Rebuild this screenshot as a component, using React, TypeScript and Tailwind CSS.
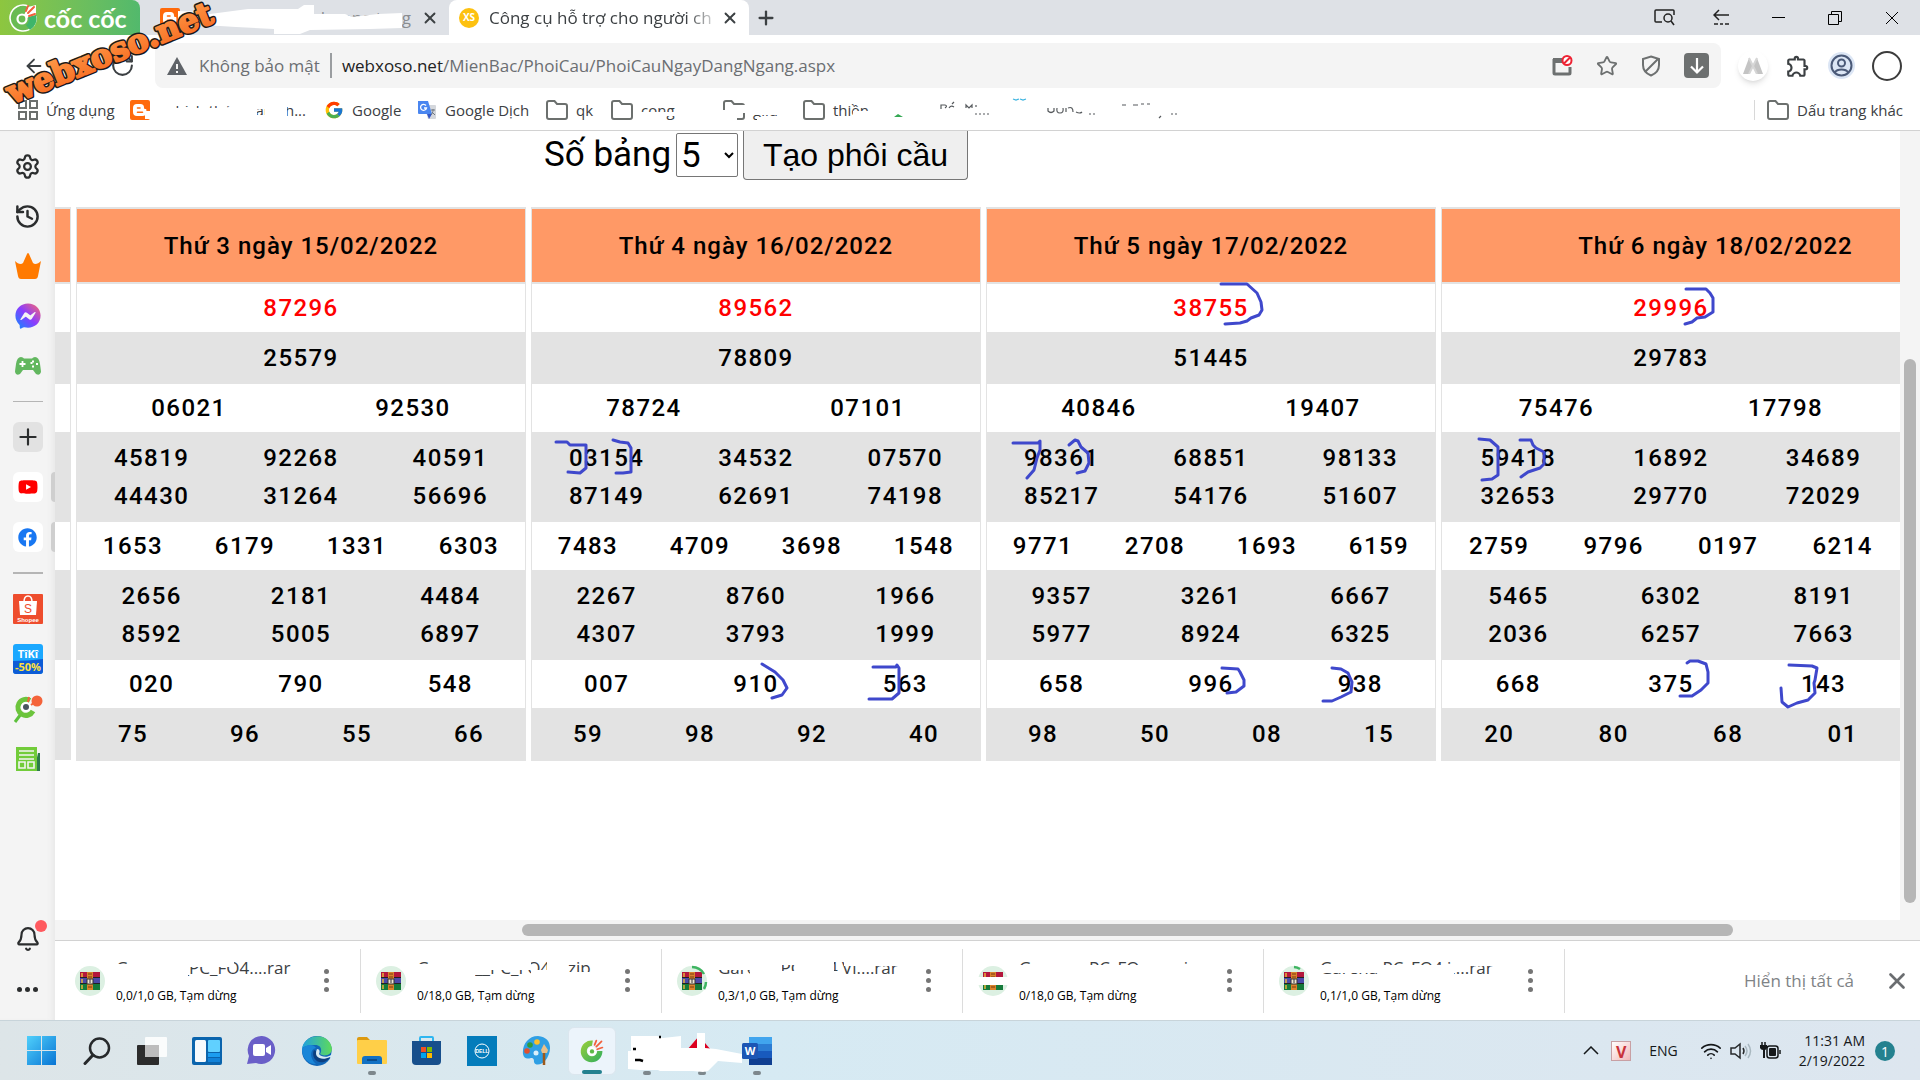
import type { ReactNode } from 'react'
import { Bell, Plus, RotateCw, ArrowLeft, Settings, Star, X, History, Wifi } from 'lucide-react'
import { FaFacebook, FaYoutube, FaFacebookMessenger } from 'react-icons/fa'
import { FcGoogle } from 'react-icons/fc'
import { MdOutlineExtension } from 'react-icons/md'

type Day = { title: string; rows: string[][][] }

// every row is a list of cells, every cell a list of stacked numbers
const DAYS: Day[] = [
  {
    title: 'Thứ 3 ngày 15/02/2022',
    rows: [
      [['87296']],
      [['25579']],
      [['06021'], ['92530']],
      [['45819', '44430'], ['92268', '31264'], ['40591', '56696']],
      [['1653'], ['6179'], ['1331'], ['6303']],
      [['2656', '8592'], ['2181', '5005'], ['4484', '6897']],
      [['020'], ['790'], ['548']],
      [['75'], ['96'], ['55'], ['66']],
    ],
  },
  {
    title: 'Thứ 4 ngày 16/02/2022',
    rows: [
      [['89562']],
      [['78809']],
      [['78724'], ['07101']],
      [['03154', '87149'], ['34532', '62691'], ['07570', '74198']],
      [['7483'], ['4709'], ['3698'], ['1548']],
      [['2267', '4307'], ['8760', '3793'], ['1966', '1999']],
      [['007'], ['910'], ['563']],
      [['59'], ['98'], ['92'], ['40']],
    ],
  },
  {
    title: 'Thứ 5 ngày 17/02/2022',
    rows: [
      [['38755']],
      [['51445']],
      [['40846'], ['19407']],
      [['98361', '85217'], ['68851', '54176'], ['98133', '51607']],
      [['9771'], ['2708'], ['1693'], ['6159']],
      [['9357', '5977'], ['3261', '8924'], ['6667', '6325']],
      [['658'], ['996'], ['938']],
      [['98'], ['50'], ['08'], ['15']],
    ],
  },
  {
    title: 'Thứ 6 ngày 18/02/2022',
    rows: [
      [['29996']],
      [['29783']],
      [['75476'], ['17798']],
      [['59418', '32653'], ['16892', '29770'], ['34689', '72029']],
      [['2759'], ['9796'], ['0197'], ['6214']],
      [['5465', '2036'], ['6302', '6257'], ['8191', '7663']],
      [['668'], ['375'], ['143']],
      [['20'], ['80'], ['68'], ['01']],
    ],
  },
]

const STROKES = [
  'M556 442L567 442L570 445L586 445L586 468L580 473L568 472',
  'M613 440L620 442L628 443L631 448L631 472L623 473L616 473',
  'M1221 284L1247 284L1257 293L1261 302L1262 310L1259 315L1251 318L1247 321L1240 323L1225 324',
  'M1013 443L1038 443L1040 441L1040 450L1037 458L1034 470L1027 478',
  'M1069 445L1075 440L1078 441L1081 447L1088 453L1089 463L1085 471L1077 473',
  'M1686 289L1706 289L1710 293L1713 298L1713 312L1705 317L1697 318L1692 322L1685 324',
  'M1479 439L1490 440L1498 447L1498 463L1498 475L1492 479L1482 480',
  'M1520 440L1531 440L1533 445L1536 448L1544 452L1544 464L1540 468L1528 472L1521 477',
  'M873 667L896 667L897 665L899 668L899 693L892 699L869 699',
  'M1222 668L1238 669L1240 672L1244 680L1244 686L1236 692L1227 693',
  'M1332 668L1341 669L1348 673L1352 682L1351 692L1341 697L1332 701L1323 701',
  'M1687 663L1690 661L1698 661L1706 664L1708 672L1708 683L1701 690L1692 696L1680 696',
  'M1789 665L1812 666L1817 668L1815 680L1814 683L1815 693L1808 700L1797 703L1788 707L1782 702L1781 688',
  'M762 664L775 672L783 680L787 688L782 695L772 698',
]

type Cover = [number, number, number, number]

const DOWNLOADS: { name: string; size: string; arc?: string; covers: Cover[] }[] = [
  {
    name: 'Garena__PC_FO4....rar',
    size: '0,0/1,0 GB, Tạm dừng',
    covers: [[0, 10, 34, 20], [34, 0, 38, 30], [72, 0, 46, 13]],
  },
  {
    name: 'Garena__PC_FO4....zip',
    size: '0/18,0 GB, Tạm dừng',
    covers: [[0, 10, 22, 20], [22, 0, 36, 30], [58, 0, 56, 16], [114, 16, 16, 14], [130, 0, 18, 30], [148, 18, 40, 14]],
  },
  {
    name: 'Garena PC FO4 Vi....rar',
    size: '0,3/1,0 GB, Tạm dừng',
    arc: 'M16 2A14 14 0 0 1 28 9M30 17A14 14 0 0 1 28 24',
    covers: [[0, 0, 36, 16], [32, 0, 32, 30], [64, 0, 14, 11], [64, 17, 60, 14], [78, 0, 38, 30], [126, 0, 70, 12]],
  },
  {
    name: 'Garena _PC_FO4 .....zip',
    size: '0/18,0 GB, Tạm dừng',
    covers: [[0, 11, 190, 20], [12, 0, 48, 30], [120, 0, 30, 30]],
  },
  {
    name: 'Garena PC_FO4 i....rar',
    size: '0,1/1,0 GB, Tạm dừng',
    arc: 'M16 2A14 14 0 0 1 22 4',
    covers: [[0, 11, 136, 8], [12, 0, 46, 17], [58, 11, 76, 20], [136, 0, 54, 12]],
  },
]

function Covers({ rects }: { rects: Cover[] }) {
  return (
    <svg className="absolute inset-0 h-full w-full overflow-visible" aria-hidden="true">
      {rects.map(([x, y, w, h], i) => (
        <rect key={i} x={x} y={y} width={w} height={h} fill="#fff" />
      ))}
    </svg>
  )
}

function Folder() {
  return (
    <svg width="22" height="20" viewBox="0 0 22 20" fill="none" stroke="#6c706e" strokeWidth="2" className="shrink-0">
      <path d="M1 3a2 2 0 0 1 2-2h5.500l2.500 3h8a2 2 0 0 1 2 2v11a2 2 0 0 1-2 2H3a2 2 0 0 1-2-2z" />
    </svg>
  )
}

function Blogger() {
  return (
    <svg width="20" height="20" viewBox="0 0 20 20" className="shrink-0">
      <rect width="20" height="20" rx="2" fill="#ff6a0c" />
      <path d="M7 4h3.500a3.500 3.500 0 0 1 3.500 3.500c0 1 .5 1.500 1.500 1.500.7 0 .9.500.9 1V12a4 4 0 0 1-4 4H7a4 4 0 0 1-4-4V8a4 4 0 0 1 4-4z" fill="#fff" />
      <path d="M7.500 8h2.500M7.500 12.200h5" stroke="#ff6a0c" strokeWidth="1.600" strokeLinecap="round" />
    </svg>
  )
}

function CocCoc({ size = 30, mono = false }: { size?: number; mono?: boolean }) {
  return (
    <svg width={size} height={size} viewBox="0 0 30 30" fill="none">
      <defs>
        <linearGradient id="leaf" x1="0" y1="0" x2="1" y2="1">
          <stop offset="0" stopColor="#9bcf3a" />
          <stop offset="1" stopColor="#2fae5e" />
        </linearGradient>
      </defs>
      {mono ? (
        <>
          <path d="M20 3A13 13 0 1 0 28 14l-4-1" stroke="#fff" strokeWidth="1.600" fill="#69bb52" />
          <path d="M28 2L20 4l-4 8 3 3 9-3z" fill="#fff" />
          <path d="M28 12l-8 2a6 6 0 0 1-2 8l4 5a13 13 0 0 0 6-15z" fill="#3fb56a" />
          <circle cx="14" cy="16" r="4.500" stroke="#fff" strokeWidth="2.200" fill="#69bb52" />
        </>
      ) : (
        <>
          <path d="M16 3A12.500 12.500 0 1 0 27 15h-6a6 6 0 1 1-6-6z" fill="url(#leaf)" />
          <circle cx="15" cy="15.500" r="5" fill="#fff" />
          <circle cx="15" cy="15.500" r="2.500" fill="#5cb947" />
        </>
      )}
      <path d="M18 8l2-5M20 10l6-6M21 13l6-2" stroke="#f2603c" strokeWidth="2" strokeLinecap="round" />
    </svg>
  )
}

function WindowButton({ label, children }: { label: string; children: ReactNode }) {
  return (
    <button aria-label={label} className="flex w-4 items-center justify-center [&>svg]:shrink-0">
      {children}
    </button>
  )
}

function TabBar() {
  return (
    <div className="flex h-[35px] shrink-0 bg-[#dee1e6]">
      <button className="flex w-[140px] shrink-0 items-center gap-1.5 rounded-tr-lg bg-linear-to-r from-[#8dc63f] to-[#52b96c] pl-2 text-white">
        <CocCoc mono />
        <span className="font-['Lato'] text-[25px] leading-8 font-bold whitespace-nowrap">cốc cốc</span>
      </button>
      <div className="relative flex w-[309px] shrink-0 items-center pr-2.5 pl-5">
        <Blogger />
        <span className="ml-auto text-[17px] whitespace-nowrap text-[#8a8d91]">ngara huong tang</span>
        <button aria-label="Đóng thẻ" className="ml-2.5 text-[#3c4043]">
          <X size={18} strokeWidth={2.5} />
        </button>
        <svg className="absolute inset-0" width="309" height="35" aria-hidden="true">
          <path d="M38 11L60 12L70 14L108 9L158 9L164 5H174V14L205 14L212 17L238 14L262 13V28L230 29L170 30L160 34H134V29L96 27L64 25L38 23z" fill="#fff" />
        </svg>
      </div>
      <div className="flex w-[300px] shrink-0 items-center rounded-t-lg bg-white pr-2.5 pl-2.5">
        <span className="grid size-5 place-items-center rounded-full bg-[#fdc110] text-[10px] font-bold text-white">XS</span>
        <span className="ml-2.5 flex-1 mask-r-from-85% text-[17px] whitespace-nowrap text-[#3c4043]">Công cụ hỗ trợ cho người ch</span>
        <button aria-label="Đóng thẻ" className="text-[#3c4043]">
          <X size={18} strokeWidth={2.5} />
        </button>
      </div>
      <button aria-label="Thẻ mới" className="ml-1.5 text-[#3c4043]">
        <Plus size={22} strokeWidth={2.5} />
      </button>
      <div className="ml-auto flex items-center gap-[41px] pr-5 text-black">
        <WindowButton label="Tìm thẻ">
          <svg width="21" height="17" viewBox="0 0 21 17" fill="none" stroke="#222" strokeWidth="1.500">
            <path d="M8 13H2a1 1 0 0 1-1-1V2a1 1 0 0 1 1-1h17a1 1 0 0 1 1 1v4" />
            <circle cx="14" cy="9" r="4" />
            <path d="M17 12l3 4" />
          </svg>
        </WindowButton>
        <WindowButton label="Thu gọn">
          <svg width="17" height="17" viewBox="0 0 17 17" fill="none" stroke="#222" strokeWidth="1.500">
            <path d="M6 1L1 6l5 5M1 6h15M1 15h4M7 15h3M12 15h4" />
          </svg>
        </WindowButton>
        <WindowButton label="Thu nhỏ">
          <span className="h-px w-[13px] bg-black" />
        </WindowButton>
        <WindowButton label="Khôi phục">
          <svg width="14" height="14" viewBox="0 0 14 14" fill="none" stroke="#000">
            <path d="M.5 3.500h10v10h-10zM3.500 3.500v-3h10v10h-3" />
          </svg>
        </WindowButton>
        <WindowButton label="Đóng">
          <svg width="14" height="14" viewBox="0 0 14 14" stroke="#000">
            <path d="M1 1l12 12M13 1L1 13" />
          </svg>
        </WindowButton>
      </div>
    </div>
  )
}

function AddressBar() {
  return (
    <div className="flex h-[53px] shrink-0 items-end pr-[18px] text-[#3c4043]">
      <div className="flex h-[45px] w-[155px] shrink-0 items-center justify-between pr-5 pl-[23px]">
        <button aria-label="Quay lại">
          <ArrowLeft size={22} />
        </button>
        <button aria-label="Tải lại">
          <RotateCw size={25} />
        </button>
      </div>
      <div className="flex h-[45px] flex-1 items-center rounded-lg bg-[#f4f4f4] pr-3 pl-3">
        <svg width="20" height="18" viewBox="0 0 20 18">
          <path d="M10 0L20 18H0z" fill="#5f6368" />
          <path d="M10 7v5M10 14v2" stroke="#f4f4f4" strokeWidth="2" />
        </svg>
        <span className="pl-3 text-[17px] whitespace-nowrap text-[#6b6e72]">Không bảo mật</span>
        <span className="mx-2.5 h-[25px] w-[2px] bg-[#9a9da0]" />
        <input
          aria-label="Địa chỉ"
          className="sr-only"
          readOnly
          tabIndex={-1}
          value="webxoso.net/MienBac/PhoiCau/PhoiCauNgayDangNgang.aspx"
        />
        <span className="flex-1 text-[17px] whitespace-nowrap text-[#6b6e72]">
          <span className="text-[#222]">webxoso.net</span>/MienBac/PhoiCau/PhoiCauNgayDangNgang.aspx
        </span>
        <div className="flex items-center gap-[23px] text-[#6d7070]">
          <button aria-label="Cửa sổ bị chặn">
            <svg width="21" height="21" viewBox="0 0 21 21" fill="none">
              <path d="M2 4v14a1 1 0 0 0 1 1h14a1 1 0 0 0 1-1v-6" stroke="#6d7070" strokeWidth="3" />
              <path d="M1 3h9v5H1z" fill="#6d7070" />
              <circle cx="15" cy="5.500" r="4.500" stroke="#ee2233" strokeWidth="2" fill="#fff" />
              <path d="M12 8.500l6-6" stroke="#ee2233" strokeWidth="2" />
            </svg>
          </button>
          <button aria-label="Đánh dấu trang">
            <Star size={22} />
          </button>
          <button aria-label="Lá chắn">
            <svg width="20" height="22" viewBox="0 0 20 22" fill="none" stroke="#6d7070" strokeWidth="2">
              <path d="M10 1.500l8 2.500v6c0 5-3 8.500-8 10.500C5 18.500 2 15 2 10V4zM4 17L17 4" />
            </svg>
          </button>
          <button aria-label="Tải xuống" className="grid size-[25px] place-items-center rounded-sm bg-[#6d7070]">
            <svg width="16" height="18" viewBox="0 0 16 18" fill="none" stroke="#fff" strokeWidth="2.200">
              <path d="M8 1v14M2 9.500l6 6 6-6" />
            </svg>
          </button>
        </div>
      </div>
      <div className="flex h-[45px] items-center gap-[17px] pl-[17px]">
        <button aria-label="Tiện ích" className="grid size-[30px] place-items-center rounded-full bg-white shadow-md">
          <svg width="20" height="17" viewBox="0 0 20 17">
            <path d="M0 17L6 1l4 7-4 9zM20 17L14 1l-4 7 4 9z" fill="#c4c4c4" />
            <path d="M6 1l8 16M14 1L6 17" stroke="#d6d6d6" strokeWidth="2" />
          </svg>
        </button>
        <button aria-label="Phần mở rộng">
          <MdOutlineExtension size={26} />
        </button>
        <button aria-label="Hồ sơ" className="grid size-[27px] place-items-center rounded-full bg-[#dce6f5]">
          <svg width="23" height="23" viewBox="0 0 23 23" fill="none" stroke="#4b5a78" strokeWidth="2">
            <circle cx="11.500" cy="11.500" r="10" />
            <circle cx="11.500" cy="9" r="3.500" />
            <path d="M4.500 18.500c3-4 11-4 14 0" />
          </svg>
        </button>
        <button aria-label="Menu" className="size-[30px] rounded-full border-2 border-[#3c3c3c]" />
      </div>
    </div>
  )
}

function Bookmarks() {
  return (
    <nav className="flex h-[43px] shrink-0 items-center border-b border-[#d2d2d2] pt-0.5 pr-[17px] pl-[18px] text-[15px] whitespace-nowrap text-[#3c4043]">
      <a href="#apps" className="flex items-center gap-2">
        <svg width="20" height="20" viewBox="0 0 20 20" fill="none" stroke="#6c706e" strokeWidth="2">
          <path d="M1 1h7v7H1zM12 1h7v7h-7zM1 12h7v7H1zM12 12h7v7h-7z" />
        </svg>
        <span className="w-16">Ứng dụng</span>
      </a>
      <a href="#blog" className="relative ml-5 flex w-[176px] items-center justify-between">
        <Blogger />
        <span>bích thủy trang h...</span>
        <Covers rects={[[15, 12, 6, 8], [21, 0, 138, 7], [21, 9, 106, 10], [127, 16, 8, 10], [21, 16, 106, 3], [21, 19, 100, 10], [100, 0, 56, 10], [135, 8, 22, 18], [156, 0, 10, 8]]} />
      </a>
      <a href="#google" className="ml-[18px] flex items-center gap-2">
        <FcGoogle size={20} />
        <span className="w-[49px]">Google</span>
      </a>
      <a href="#translate" className="ml-4 flex items-center gap-2">
        <svg width="20" height="20" viewBox="0 0 20 20">
          <path d="M7 5h11a1 1 0 0 1 1 1v12a1 1 0 0 1-1 1h-7z" fill="#d4d7dc" />
          <path d="M1 1h10l4 13H2a1 1 0 0 1-1-1z" fill="#4a86f0" />
          <path d="M10 14h5l-3 5z" fill="#3457c8" />
          <path d="M9 5.500A3 3 0 1 0 9.500 8H7" stroke="#fff" strokeWidth="1.300" fill="none" />
          <path d="M14 10h4M16 9v1c0 2-1 4-2 5M15 12l3 3" stroke="#6f7680" fill="none" />
        </svg>
        <span className="w-[82px]">Google Dịch</span>
      </a>
      <a href="#qk" className="ml-[19px] flex items-center gap-2">
        <Folder />
        <span className="w-4">qk</span>
      </a>
      <a href="#cong" className="relative ml-[19px] flex w-[68px] items-center gap-2">
        <Folder />
        <span>cong</span>
        <Covers rects={[[28, 13, 26, 9], [54, 13, 20, 4]]} />
      </a>
      <a href="#tools" className="relative ml-11 flex w-[66px] items-center gap-2">
        <Folder />
        <span>gild</span>
        <Covers rects={[[0, 11, 14, 12], [14, 6, 10, 8], [22, 0, 44, 16], [34, 18, 22, 8]]} />
      </a>
      <a href="#thien" className="relative ml-3.5 flex items-center gap-2">
        <Folder />
        <span className="w-9">thiền</span>
        <Covers rects={[[50, 12, 18, 8]]} />
      </a>
      <span className="relative ml-5 h-6 flex-1" aria-hidden="true">
        <svg width="320" height="24" viewBox="0 0 320 24" fill="none" stroke="#55595c" strokeWidth="1.200">
          <path d="M0 19h5l4-3 5 3z" fill="#34a853" stroke="none" />
          <path d="M52 11v-4h4q3 1 0 3M60 10q2-3 5-1M63 6l2-2M77 10V7l3 3 3-3v3M87 7v2M86 16h2M90 16h2M94 16h2M98 16h2" />
          <path d="M124 1l3 1 3-1M131 1l3 1 3-1" stroke="#3cb4e0" />
          <path d="M159 10v3q3 3 6 0v-3M168 10q-1 5 3 5t3-5M177 10v4M179 10q5-2 5 4M187 14q4 2 6 0M200 16h2M204 16h2" />
          <path d="M233 7h4M244 7h5M252 6h3M258 6h3M272 18l-2 2M282 16h2M286 16h2" />
        </svg>
      </span>
      <a href="#other" className="flex h-5 items-center gap-2 border-l border-[#d8d8d8] pl-3">
        <Folder />
        Dấu trang khác
      </a>
    </nav>
  )
}

function SideItem({ label, children }: { label: string; children: ReactNode }) {
  return (
    <button aria-label={label} className="relative grid h-[50px] w-full place-items-center">
      {children}
    </button>
  )
}

function Sidebar() {
  return (
    <aside className="flex w-[55px] shrink-0 flex-col items-center bg-[#f4f4f4] pt-2.5 pb-1.5 text-[#2b2d2e] shadow-[inset_-6px_0_6px_-4px_#e6e6e6]">
      <SideItem label="Cài đặt"><Settings size={27} /></SideItem>
      <SideItem label="Lịch sử"><History size={27} strokeWidth={2.2} /></SideItem>
      <SideItem label="Vương miện">
        <svg width="26" height="26" viewBox="0 0 26 26">
          <path d="M0 8c3 3 6 4 8 2l4-9q1-2 2 0l4 9c2 2 5 1 8-2l-3 15q-.5 3-3 3H6q-2.500 0-3-3z" fill="#ff7a00" />
        </svg>
      </SideItem>
      <SideItem label="Messenger">
        <svg width="0" height="0" className="absolute">
          <linearGradient id="msg" x1="0" y1="1" x2="1" y2="0">
            <stop offset="0" stopColor="#0a8dff" />
            <stop offset=".5" stopColor="#8a3cff" />
            <stop offset="1" stopColor="#ff6b68" />
          </linearGradient>
        </svg>
        <FaFacebookMessenger size={26} fill="url(#msg)" />
      </SideItem>
      <SideItem label="Trò chơi">
        <svg width="26" height="18" viewBox="0 0 26 18">
          <path d="M6 0q2 0 3 1.500h8Q18 0 20 0q4 0 5 7t1 8q-1 4-5 2l-3-4H8l-3 4q-4 2-5-2 0-1 1-8t5-7z" fill="#62b75f" />
          <path d="M7.500 4v6M4.500 7h6" stroke="#fff" strokeWidth="1.800" />
          <path d="M18 3.500v2M18 8.500v2M15.500 6h2M21 7h2" stroke="#fff" strokeWidth="2" />
        </svg>
      </SideItem>
      <hr className="my-[10px] h-px w-[30px] border-0 bg-[#b5b5b5]" />
      <SideItem label="Thêm">
        <span className="grid size-[30px] place-items-center rounded-md bg-[#e2e2e2]"><Plus size={26} /></span>
      </SideItem>
      <SideItem label="YouTube">
        <span className="grid size-[30px] place-items-center rounded-md bg-white"><FaYoutube size={20} color="#f00" /></span>
        <span className="absolute right-0 h-[30px] w-1 rounded-l-md bg-[#cfcfcf]" />
      </SideItem>
      <SideItem label="Facebook">
        <span className="grid size-[30px] place-items-center rounded-md bg-white"><FaFacebook size={19} color="#1877f2" /></span>
        <span className="absolute right-0 h-[30px] w-1 rounded-l-md bg-[#cfcfcf]" />
      </SideItem>
      <hr className="my-[10px] h-[2px] w-[30px] border-0 bg-[#b5b5b5]" />
      <SideItem label="Shopee">
        <svg width="30" height="30" viewBox="0 0 30 30">
          <rect width="30" height="30" rx="1" fill="#ee4d2d" />
          <path d="M6 7h18l-1 14H7z" fill="#fff" />
          <path d="M11 8q0-6 4-6t4 6" stroke="#fff" strokeWidth="1.500" fill="none" />
          <text x="15" y="19" textAnchor="middle" fontSize="12" fontFamily="Liberation Sans" fill="#ee4d2d">S</text>
          <text x="15" y="28" textAnchor="middle" fontSize="6" fontWeight="700" fontFamily="Liberation Sans" fill="#fff">Shopee</text>
        </svg>
      </SideItem>
      <SideItem label="Tiki">
        <svg width="30" height="30" viewBox="0 0 30 30">
          <rect width="30" height="30" rx="3" fill="#1ba8ff" />
          <path d="M0 17q15 0 30-2v12a3 3 0 0 1-3 3H3a3 3 0 0 1-3-3z" fill="#0d5cd6" />
          <text x="15" y="14" textAnchor="middle" fontSize="11" fontWeight="700" fontFamily="Open Sans" fill="#fff">TîKî</text>
          <text x="15" y="27" textAnchor="middle" fontSize="11" fontWeight="700" fontFamily="Open Sans" fill="#ffe03c">-50%</text>
        </svg>
      </SideItem>
      <SideItem label="Cốc Cốc">
        <svg width="30" height="30" viewBox="0 0 30 30" fill="none">
          <path d="M2 28l6-8" stroke="#5cc03c" strokeWidth="3" />
          <path d="M17 6.500A8 8 0 1 0 20 17" stroke="#6cc43c" strokeWidth="5" />
          <circle cx="13" cy="13" r="5" fill="#fff" />
          <circle cx="13" cy="13" r="3" fill="#4a5660" />
          <path d="M15 8l1-5M18 11l4-3" stroke="#f4633a" strokeWidth="2" />
          <circle cx="24" cy="7" r="5.500" fill="#f4633a" />
        </svg>
      </SideItem>
      <SideItem label="Tin tức">
        <svg width="26" height="26" viewBox="0 0 26 26" fill="none">
          <path d="M23 7h2v18h-6z" fill="#2d7a4b" />
          <path d="M1 1h21v24H1z" fill="#72cc3a" />
          <path d="M4 5h15M4 9h15M4 13h15M4 16h6v6H4zM13 16h6v6h-6z" stroke="#f4f4f4" strokeWidth="1.600" />
        </svg>
      </SideItem>
      <div className="mt-auto w-full">
        <SideItem label="Thông báo">
          <Bell size={26} />
          <span className="absolute top-1.5 right-2 size-3 rounded-full bg-[#ff5a5f]" />
        </SideItem>
        <SideItem label="Thêm nữa">
          <span className="flex gap-[3px]">
            {[0, 1, 2].map((i) => <span key={i} className="size-[5px] rounded-full bg-[#2b2d2e]" />)}
          </span>
        </SideItem>
      </div>
    </aside>
  )
}

function DayTable({ day, last }: { day: Day; last: boolean }) {
  return (
    <table
      className={`shrink-0 table-fixed border-separate border-spacing-0 border border-t-2 border-[#e3e3e3] text-center text-[24px] leading-[38px] font-medium tracking-[0.06em] text-black ${
        last ? 'w-[549px]' : 'w-[450px]'
      }`}
    >
      <colgroup>
        {Array.from({ length: 12 }, (_, i) => <col key={i} />)}
        {last && <col className="w-[89px]" />}
      </colgroup>
      <thead>
        <tr>
          <th colSpan={last ? 13 : 12} className="h-[75px] border-b-2 border-[#e3e3e3] bg-[#ff9966] p-0 font-medium tracking-[1px]">
            {day.title}
          </th>
        </tr>
      </thead>
      <tbody>
        {day.rows.map((cells, r) => {
          const gray = r % 2 === 1
          const height = cells[0].length === 2 ? 'h-[90px]' : gray ? 'h-[52px]' : 'h-12'
          return (
            <tr key={r} className={`${gray ? 'bg-[#e3e3e3]' : 'bg-white'} ${r === 0 ? 'text-[#ff0000]' : ''}`}>
              {cells.map((nums, c) => (
                <td key={c} colSpan={12 / cells.length} className={`p-0 ${height}`}>
                  {nums.map((n) => <div key={n}>{n}</div>)}
                </td>
              ))}
              {last && <td />}
            </tr>
          )
        })}
      </tbody>
    </table>
  )
}

function Page() {
  return (
    <main className="relative flex-1 overflow-hidden bg-white font-['Roboto',sans-serif] text-black">
      <form className="flex items-start gap-[5px] pl-[489px]" onSubmit={(e) => e.preventDefault()}>
        <label htmlFor="count" className="w-[127px] text-[35px] leading-[48px] whitespace-nowrap">Số bảng</label>
        <select id="count" defaultValue="5" className="mt-[2px] h-11 w-[62px] rounded-xs border border-[#767676] bg-white text-[35px] leading-9">
          <option>5</option>
        </select>
        <button className="h-[49px] w-[225px] rounded-b-sm border border-t-0 border-[#767676] bg-[#efefef] font-['Liberation_Sans',sans-serif] text-[32px] leading-[46px]">
          Tạo phôi cầu
        </button>
      </form>
      <div className="mt-[27px] flex items-start gap-[5px]">
        <div className="w-4 shrink-0 border-t-2 border-r border-[#e3e3e3]">
          <div className="h-[75px] border-b-2 border-[#e3e3e3] bg-[#ff9966]" />
          <div className="h-12" />
          <div className="h-[52px] bg-[#e3e3e3]" />
          <div className="h-12" />
          <div className="h-[90px] bg-[#e3e3e3]" />
          <div className="h-12" />
          <div className="h-[90px] bg-[#e3e3e3]" />
          <div className="h-12" />
          <div className="h-[52px] bg-[#e3e3e3]" />
        </div>
        {DAYS.map((day, i) => <DayTable key={day.title} day={day} last={i === DAYS.length - 1} />)}
      </div>
      {/* pen marks */}
      <svg className="absolute top-0 left-0" width="1845" height="789" viewBox="55 131 1845 789" fill="none" stroke="#3f48cc" strokeWidth="3" strokeLinecap="round" strokeLinejoin="round">
        {STROKES.map((d) => <path key={d} d={d} />)}
      </svg>
    </main>
  )
}

function RarIcon({ arc }: { arc?: string }) {
  return (
    <svg width="32" height="32" viewBox="0 0 32 32" fill="none" className="shrink-0">
      <circle cx="16" cy="16" r="15" fill="#dcf0e2" />
      <path d="M6 7h20v6H6z" fill="#b3173c" />
      <path d="M6 13h20v6H6z" fill="#4a4aa8" />
      <path d="M6 19h20v6H6z" fill="#157a3a" />
      <path d="M6 12.500h20M6 18.500h20" stroke="#222" />
      <path d="M8 8v4M8 14v4M8 20v4" stroke="#e8b53a" strokeWidth="1.500" />
      <path d="M13 7h6v18h-6z" fill="#d9822b" />
      <path d="M14 9h4M14 12h4M14 22h4" stroke="#7a3d10" />
      <path d="M13 14h6v5h-6z" fill="#f0e6d2" stroke="#333" />
      <path d="M16 14v4" stroke="#333" />
      {arc && <path d={arc} stroke="#3fb562" strokeWidth="2.500" />}
    </svg>
  )
}

function Downloads() {
  return (
    <div className="flex h-[80px] shrink-0 items-center border-t border-[#d2d2d2] bg-white pl-[5px]">
      {DOWNLOADS.map((d, i) => (
        <div key={i} className="flex h-16 w-[301px] shrink-0 items-center border-r border-[#dcdcdc] pl-3.5">
          <div className="relative">
            <RarIcon arc={d.arc} />
            {i === 3 && <Covers rects={[[0, 12, 32, 8]]} />}
          </div>
          <div className="ml-2.5 w-[208px] whitespace-nowrap">
            <div className="relative h-[30px] text-[17px] leading-7 text-[#3c4043]">
              {d.name}
              <Covers rects={d.covers} />
            </div>
            <div className="text-[12px] leading-6 text-black">{d.size}</div>
          </div>
          <button aria-label="Tùy chọn" className="flex flex-col gap-1">
            {[0, 1, 2].map((k) => <span key={k} className="size-[5px] rounded-full bg-[#757575]" />)}
          </button>
        </div>
      ))}
      <button className="ml-auto text-[17px] whitespace-nowrap text-[#808386]">Hiển thị tất cả</button>
      <button aria-label="Đóng" className="mr-2.5 ml-[30px] text-[#6a6d70]">
        <X size={26} strokeWidth={2.5} />
      </button>
    </div>
  )
}

function Task({ label, dot, children }: { label: string; dot?: boolean; children: ReactNode }) {
  return (
    <button aria-label={label} className="relative grid h-[60px] w-[55px] shrink-0 place-items-center">
      {children}
      {dot && <span className="absolute bottom-1.5 h-1 w-2 rounded-full bg-[#7d878c]" />}
    </button>
  )
}

function Taskbar() {
  return (
    <footer className="flex h-[60px] shrink-0 items-center border-t border-[#c8d4da] bg-linear-to-r from-[#dde5e8] via-[#d6eaf3] via-40% to-[#dde6ef] pr-[25px] pl-3.5">
      <Task label="Start">
        <svg width="29" height="29" viewBox="0 0 29 29">
          <defs>
            <linearGradient id="win" x1="0" y1="0" x2="1" y2="1">
              <stop offset="0" stopColor="#50d0fb" />
              <stop offset="1" stopColor="#0874d4" />
            </linearGradient>
          </defs>
          <path d="M0 0h14v14H0zM15 0h14v14H15zM0 15h14v14H0zM15 15h14v14H15z" fill="url(#win)" />
        </svg>
      </Task>
      <Task label="Search">
        <svg width="28" height="28" viewBox="0 0 28 28" fill="none" stroke="#26292b" strokeWidth="2.500" strokeLinecap="round">
          <circle cx="16.500" cy="11" r="9.500" />
          <path d="M10 18L2 26.500" strokeWidth="3" />
        </svg>
      </Task>
      <Task label="Task View">
        <svg width="30" height="28" viewBox="0 0 30 28">
          <rect y="8" width="22" height="20" rx="1" fill="#2c2c2c" />
          <rect x="8" width="22" height="20" rx="1" fill="#fff" opacity=".85" />
          <path d="M8 8h14v12H8z" fill="#bdbdbd" />
        </svg>
      </Task>
      <Task label="Widgets">
        <svg width="30" height="28" viewBox="0 0 30 28">
          <rect width="30" height="28" rx="2" fill="#0a64ad" />
          <rect x="3" y="3" width="11" height="22" rx="1.500" fill="#f5f9fc" />
          <rect x="16" y="3" width="12" height="12" rx="1" fill="#60d0ff" />
          <rect x="16" y="16" width="12" height="4" fill="#1b9df0" />
          <rect x="16" y="21" width="12" height="4" fill="#1182d8" />
        </svg>
      </Task>
      <Task label="Chat">
        <svg width="29" height="29" viewBox="0 0 29 29">
          <path d="M15 0a14 14 0 1 1-6 27L0 28l2-8A14 14 0 0 1 15 0z" fill="#6a5fc8" />
          <rect x="6" y="8" width="12" height="12" rx="2" fill="#fff" />
          <path d="M19 12l5-3v10l-5-3z" fill="#fff" />
        </svg>
      </Task>
      <Task label="Edge">
        <svg width="30" height="30" viewBox="0 0 30 30">
          <defs>
            <linearGradient id="edge" x1="0" y1="0" x2="1" y2="0">
              <stop offset="0" stopColor="#1fa0e0" />
              <stop offset="1" stopColor="#5edb5a" />
            </linearGradient>
          </defs>
          <circle cx="15" cy="15" r="15" fill="#1166b8" />
          <path d="M0 13C2-3 28-5 30 13c0 6-8 8-12 5 2-3 2-9-5-9S2 10 0 13z" fill="url(#edge)" />
          <path d="M12 14c-3 6 2 14 10 12 3-1 5-3 6-5-6 3-15 1-14-6z" fill="#0c3f80" />
          <path d="M0 13c4-5 12-5 14-1-6 1-7 10 0 16C4 28 0 20 0 13z" fill="#1a86d8" />
          <path d="M15 13c3 0 3 3 2 5 2 3 8 4 12 1l1-5v10l-2-3c-8 4-17 1-13-8z" fill="#d6e9f2" />
        </svg>
      </Task>
      <Task label="File Explorer" dot>
        <svg width="30" height="27" viewBox="0 0 30 27">
          <path d="M0 2a2 2 0 0 1 2-2h8l3 3h-1v8H0z" fill="#dd9a10" />
          <rect y="3" width="30" height="24" rx="1" fill="#ffcf48" />
          <path d="M5 27v-5a3 3 0 0 1 3-3h14a3 3 0 0 1 3 3v5z" fill="#1271c4" />
          <path d="M10 23h10" stroke="#0a4c8c" strokeWidth="2" />
        </svg>
      </Task>
      <Task label="Microsoft Store">
        <svg width="29" height="29" viewBox="0 0 29 29">
          <path d="M8 6V2a1 1 0 0 1 1-1h11a1 1 0 0 1 1 1v4" stroke="#2fb6f0" strokeWidth="2" fill="none" />
          <path d="M0 5h29v20a4 4 0 0 1-4 4H4a4 4 0 0 1-4-4z" fill="#174f8c" />
          <path d="M9 11h5v5H9z" fill="#f25022" />
          <path d="M15 11h5v5h-5z" fill="#7fba00" />
          <path d="M9 17h5v5H9z" fill="#00a4ef" />
          <path d="M15 17h5v5h-5z" fill="#ffb900" />
        </svg>
      </Task>
      <Task label="Dell">
        <svg width="30" height="30" viewBox="0 0 30 30">
          <path d="M0 0h30v30H0z" fill="#047cbb" />
          <circle cx="15" cy="15" r="7" fill="none" stroke="#fff" />
          <text x="15" y="17" textAnchor="middle" fontSize="5" fontWeight="700" fontFamily="Liberation Sans" fill="#fff">DELL</text>
        </svg>
      </Task>
      <Task label="Paint">
        <svg width="30" height="30" viewBox="0 0 30 30">
          <path d="M16 0C6 0 0 9 1 18c1 5 4 5 8 4 3 0 3 2 3 4 1 4 8 3 11-1C31 15 30 1 16 0z" fill="#2f9fe4" />
          <circle cx="15" cy="6" r="2.800" fill="#fbc02d" />
          <circle cx="8" cy="9" r="2.800" fill="#2e9b3e" />
          <circle cx="5" cy="15" r="2.800" fill="#e0502e" />
          <circle cx="14" cy="17" r="2.500" fill="#d9f0fb" />
          <path d="M22 14v15" stroke="#9c5a1c" strokeWidth="2.500" />
          <path d="M19 14l3-6 4 6-1 3h-5z" fill="#e9c08a" />
        </svg>
      </Task>
      <Task label="Cốc Cốc">
        <span className="relative grid size-12 place-items-center rounded-md border border-[#dbe6ee] bg-[#ecf4fb]">
          <CocCoc size={26} />
          <span className="absolute bottom-0 h-1 w-5 rounded-full bg-[#24818f]" />
        </span>
      </Task>
      <svg width="114" height="60" viewBox="0 0 114 60" className="ml-[9px] shrink-0">
        <rect x="15" y="50" width="8" height="4" rx="2" fill="#7d878c" />
        <rect x="70" y="50" width="8" height="4" rx="2" fill="#7d878c" />
        <path d="M73 15l12 14H61z" transform="translate(-2 0)" fill="#dc0020" />
        <path d="M3 15h26l6 2 18-2v12h16V12h8v15l11 1 26 5v9l-24-2-10 10-5 1-10-1H32l-2-1H12L0 48V30h3z" fill="#fff" />
        <path d="M5 28h3M7 39h5l3 1M31 16h2" stroke="#000" strokeWidth="2.500" />
      </svg>
      <button aria-label="Word" className="relative grid h-[60px] w-[30px] place-items-center">
        <svg width="30" height="28" viewBox="0 0 30 28">
          <path d="M7 0h23v7H7z" fill="#41a5ee" />
          <path d="M7 7h23v7H7z" fill="#2b7cd3" />
          <path d="M7 14h23v7H7z" fill="#185abd" />
          <path d="M7 21h23v7H7z" fill="#103f91" />
          <rect y="6" width="16" height="16" rx="1.500" fill="#1c56b4" />
          <text x="8" y="18" textAnchor="middle" fontSize="11" fontWeight="700" fontFamily="Open Sans" fill="#fff">W</text>
        </svg>
        <span className="absolute bottom-1.5 h-1 w-2 rounded-full bg-[#7d878c]" />
      </button>
      <div className="ml-auto flex items-center text-[14px] text-[#15181a]">
        <svg width="16" height="9" viewBox="0 0 16 9" fill="none" stroke="#15181a" strokeWidth="1.500">
          <path d="M1 8l7-7 7 7" />
        </svg>
        <span className="mx-3 grid size-5 place-items-center border border-[#c8a0a4] bg-linear-to-br from-white to-[#f0b8b8] text-[16px] leading-5 font-bold text-[#c8323a]">V</span>
        <span className="mr-[22px] ml-1.5">ENG</span>
        <Wifi size={22} strokeWidth={1.8} />
        <svg width="22" height="18" viewBox="0 0 22 18" fill="none" stroke="#26292b" strokeWidth="1.500" className="ml-2">
          <path d="M1 6h4l5-4v14l-5-4H1z" />
          <path d="M13 6q2 3 0 6" />
          <path d="M15 4q4 5 0 10M18 2q5 7 0 14" stroke="#a9b8c0" />
        </svg>
        <svg width="21" height="18" viewBox="0 0 21 18" fill="none" className="ml-2">
          <path d="M2 0v3M5 0v3" stroke="#15181a" strokeWidth="1.500" />
          <path d="M0 3h7v3q-1 2-2 2v8H3V8Q1 8 0 6z" fill="#15181a" />
          <rect x="7" y="4" width="11" height="12" rx="2.500" stroke="#15181a" strokeWidth="1.500" />
          <rect x="9" y="6" width="7" height="8" rx="1" fill="#15181a" />
          <path d="M20 8v4" stroke="#15181a" strokeWidth="1.500" />
        </svg>
        <div className="mr-2.5 ml-[18px] text-right leading-5">
          <div>11:31 AM</div>
          <div>2/19/2022</div>
        </div>
        <span className="grid size-5 place-items-center rounded-full bg-[#24818f] text-white">1</span>
      </div>
    </footer>
  )
}

export default function App() {
  return (
    <div className="relative flex h-screen flex-col overflow-hidden bg-white font-['Open_Sans',sans-serif]">
      <TabBar />
      <AddressBar />
      <Bookmarks />
      <div className="flex min-h-0 flex-1">
        <Sidebar />
        <div className="flex min-w-0 flex-1 flex-col">
          <div className="flex min-h-0 flex-1">
            <Page />
            <div className="w-5 shrink-0 bg-[#f4f4f4] px-1 pt-[228px] pb-[17px]">
              <div className="h-full rounded-md bg-[#b6b6b6]" />
            </div>
          </div>
          <div className="h-5 shrink-0 bg-[#f4f4f4] py-1 pr-[187px] pl-[467px]">
            <div className="h-3 rounded-md bg-[#b6b6b6]" />
          </div>
          <Downloads />
        </div>
      </div>
      <Taskbar />
      {/* site watermark */}
      <svg className="pointer-events-none absolute top-0 left-0 overflow-visible" width="230" height="120" viewBox="0 0 230 120">
        <defs>
          <linearGradient id="mark" x1="0" y1="0" x2="0" y2="1">
            <stop offset="0" stopColor="#ff9c4a" />
            <stop offset="1" stopColor="#f76a20" />
          </linearGradient>
        </defs>
        <text x="12" y="104" transform="rotate(-22 12 104)" fontFamily="DejaVu Serif" fontWeight="700" fontSize="32" fill="url(#mark)" stroke="#1a1a1a" strokeWidth="5" strokeLinejoin="round" paintOrder="stroke">
          webxoso.net
        </text>
        <text x="12" y="104" transform="rotate(-22 12 104)" fontFamily="DejaVu Serif" fontWeight="700" fontSize="32" fill="url(#mark)" stroke="url(#mark)" strokeWidth="2" strokeLinejoin="round" aria-hidden="true">
          webxoso.net
        </text>
      </svg>
    </div>
  )
}
